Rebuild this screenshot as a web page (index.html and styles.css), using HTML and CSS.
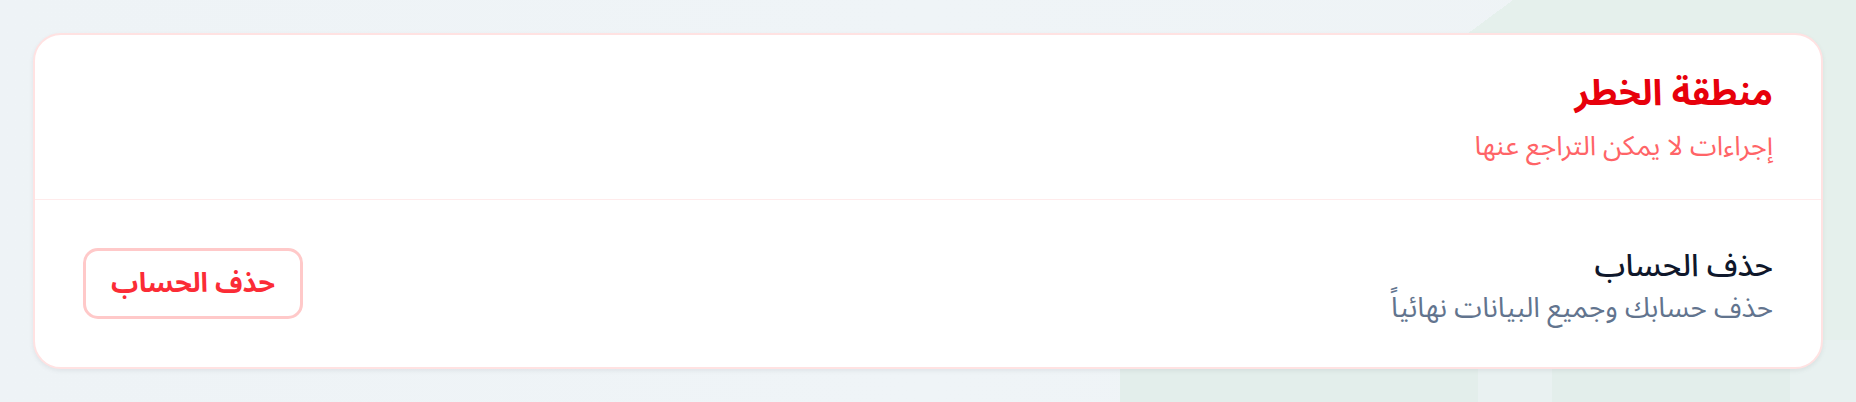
FILE: index.html
```html
<!DOCTYPE html>
<html lang="ar" dir="rtl">
<head>
<meta charset="utf-8">
<title>منطقة الخطر</title>
<link rel="stylesheet" href="styles.css">
</head>
<body>
<main class="page">
  <section class="danger-card">
    <header class="danger-head">
      <h2 class="danger-title">منطقة الخطر</h2>
      <p class="danger-sub">إجراءات لا يمكن التراجع عنها</p>
    </header>
    <div class="danger-row">
      <div class="row-text">
        <h3 class="row-title">حذف الحساب</h3>
        <p class="row-sub">حذف حسابك وجميع البيانات نهائياً</p>
      </div>
      <button class="danger-btn" type="button">حذف الحساب</button>
    </div>
  </section>
</main>
</body>
</html>
```
FILE: styles.css
```css
* { box-sizing: border-box; }
html, body { margin: 0; }
body {
  min-height: 402px;
  font-family: "Noto Sans Arabic", "Noto Sans", "DejaVu Sans", sans-serif;
  background-color: #eef3f6;
  background-repeat: no-repeat;
  background-image:
    linear-gradient(to right, transparent 1120px, #e3eeeb 1120px, #e3eeeb 1478px, #e9f1f1 1478px, #e9f1f1 1552px, #e3eeeb 1552px, #e3eeeb 1790px, #e8f1f0 1790px),
    linear-gradient(to bottom right, transparent 50%, #e5f0ec 50%),
    linear-gradient(#e5f0ec, #e5f0ec),
    linear-gradient(90deg, #eef3f6 0%, #eff4f7 50%, #eef3f5 100%);
  background-position:
    0 340px,
    1054px 0,
    1513px 0,
    0 0;
  background-size:
    100% 62px,
    459px 340px,
    343px 340px,
    100% 100%;
}
.page {
  padding: 33px;
}
.danger-card {
  background: #ffffff;
  border: 2px solid #ffe2e2;
  border-radius: 28px;
  box-shadow: 0 2px 4px rgba(90, 100, 110, 0.10);
  overflow: hidden;
}
.danger-head {
  height: 165px;
  padding: 31px 48px 0;
  border-bottom: 1px solid #ffebeb;
}
.danger-title {
  margin: 0;
  font-size: 36px;
  line-height: 56px;
  font-weight: 700;
  color: #e7000b;
}
.danger-sub {
  margin: 2px 0 0;
  font-size: 27px;
  line-height: 46px;
  font-weight: 400;
  color: #ff6467;
}
.danger-row {
  display: flex;
  align-items: center;
  justify-content: space-between;
  height: 167px;
  padding: 0 48px;
}
.row-text {
  padding-top: 5px;
}
.row-title {
  margin: 0;
  font-size: 31px;
  line-height: 44px;
  font-weight: 500;
  color: #0f172b;
}
.row-sub {
  margin: 1px 0 0;
  font-size: 28px;
  line-height: 40px;
  font-weight: 400;
  color: #62748e;
}
.danger-btn {
  font-family: inherit;
  font-size: 27px;
  line-height: 1;
  font-weight: 700;
  color: #fb2c36;
  background: #ffffff;
  border: 3px solid #ffc9c9;
  border-radius: 15px;
  width: 220px;
  height: 71px;
  padding: 0;
}
```
